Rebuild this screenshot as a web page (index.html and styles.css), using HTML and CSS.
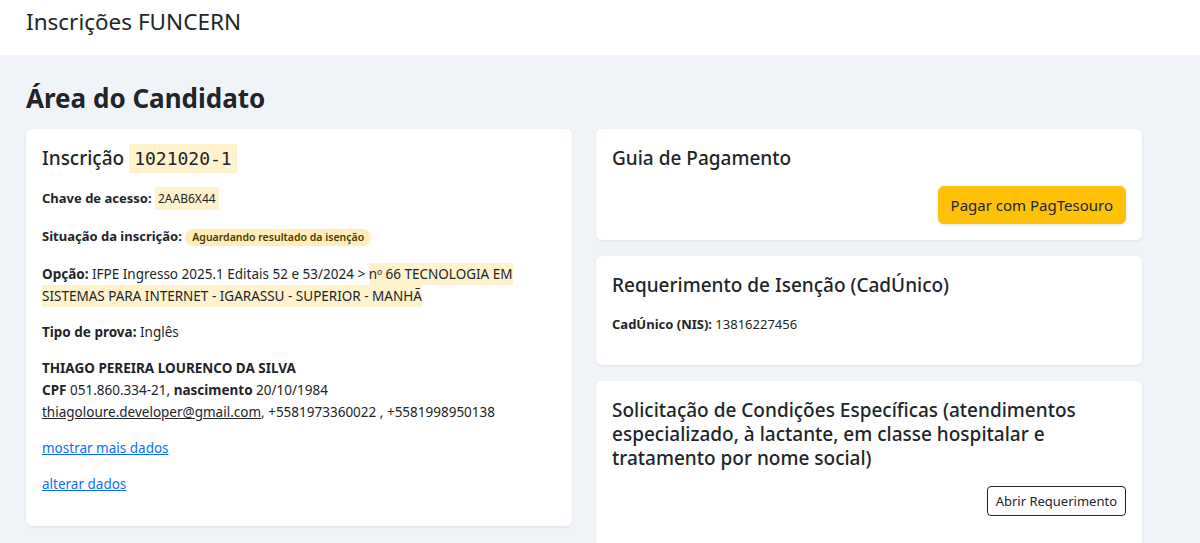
FILE: index.html
```html
<!DOCTYPE html>
<html lang="pt-BR">
<head>
<meta charset="utf-8">
<title>Inscrições FUNCERN</title>
<link rel="stylesheet" href="styles.css">
</head>
<body>
<header class="topbar">
  <span class="brand">Inscrições FUNCERN</span>
</header>
<main class="page">
  <h1 class="page-title">Área do Candidato</h1>
  <div class="columns">
    <section class="card card-main">
      <h2 class="card-title">Inscrição <mark class="code">1021020-1</mark></h2>
      <p class="small loose"><b>Chave de acesso:</b> <mark class="key">2AAB6X44</mark></p>
      <p class="small status"><b>Situação da inscrição:</b> <span class="badge">Aguardando resultado da isenção</span></p>
      <p><b>Opção:</b> IFPE Ingresso 2025.1 Editais 52 e 53/2024 &gt; <mark class="hl">nº 66 TECNOLOGIA EM SISTEMAS PARA INTERNET - IGARASSU - SUPERIOR - MANHÃ</mark></p>
      <p><b>Tipo de prova:</b> Inglês</p>
      <p><b>THIAGO PEREIRA LOURENCO DA SILVA</b><br>
        <b>CPF</b> 051.860.334-21, <b>nascimento</b> 20/10/1984<br>
        <a class="mail" href="#">thiagoloure.developer@gmail.com</a>, +5581973360022 , +5581998950138</p>
      <p class="gap"><a class="link" href="#">mostrar mais dados</a></p>
      <p><a class="link" href="#">alterar dados</a></p>
    </section>
    <div class="stack">
      <section class="card">
        <h2 class="card-title">Guia de Pagamento</h2>
        <div class="actions"><button class="btn btn-warning">Pagar com PagTesouro</button></div>
      </section>
      <section class="card">
        <h2 class="card-title">Requerimento de Isenção (CadÚnico)</h2>
        <p class="small"><b>CadÚnico (NIS):</b> 13816227456</p>
      </section>
      <section class="card card-open">
        <h2 class="card-title">Solicitação de Condições Específicas (atendimentos especializado, à lactante, em classe hospitalar e tratamento por nome social)</h2>
        <div class="actions"><button class="btn btn-outline">Abrir Requerimento</button></div>
      </section>
    </div>
  </div>
</main>
</body>
</html>
```
FILE: styles.css
```css
* { box-sizing: border-box; }
html, body { margin: 0; padding: 0; }
body {
  font-family: "Noto Sans", "Open Sans", sans-serif;
  color: #212529;
  background: #f0f3f8;
  font-size: 13.5px;
  overflow: hidden;
  height: 543px;
}
.topbar {
  background: #fff;
  height: 55px;
  padding: 7px 26px 0;
}
.brand { font-size: 22.5px; line-height: 30px; color: #212529; }
.page { padding: 25px 26px 0; }
.page-title {
  margin: 0 0 13px;
  font-size: 26px;
  line-height: 36px;
  font-weight: 700;
}
.columns {
  display: grid;
  grid-template-columns: 546px 546px;
  gap: 24px;
  align-items: start;
}
.stack { display: flex; flex-direction: column; gap: 16px; }
.card {
  background: #fff;
  border-radius: 6px;
  box-shadow: 0 1px 3px rgba(0,0,0,0.08);
  padding: 17px 16px 16px;
}
.card-main { padding-bottom: 17px; }
.card-open { min-height: 200px; }
.card-title {
  margin: 0 0 16px;
  font-size: 19px;
  line-height: 24px;
  font-weight: 500;
}
p { margin: 0 0 14px; line-height: 22px; }
p.small { font-size: 13px; }
p.loose { margin-bottom: 15px; }
p.status { margin-bottom: 16px; }
mark { color: inherit; background: #fff3cd; }
.code {
  font-family: "DejaVu Sans Mono", monospace;
  font-size: 18px;
  padding: 4px 5px;
}
.key { font-size: 12px; padding: 3px 3px; }
.hl { padding: 2px 0; }
.badge {
  display: inline-block;
  background: #ffeeba;
  color: #4a3a05;
  font-size: 10.5px;
  font-weight: 600;
  line-height: 17px;
  padding: 0 7px;
  border-radius: 8px;
}
.mail { color: #212529; }
.link { color: #0d6efd; }
.actions { display: flex; justify-content: flex-end; }
.btn {
  font-family: inherit;
  border-radius: 6px;
  cursor: pointer;
}
.btn-warning {
  background: #ffc107;
  border: 1px solid #ffc107;
  color: #212529;
  font-size: 15px;
  height: 38px;
  padding: 0 12px;
  box-shadow: 0 1px 3px rgba(0,0,0,0.12);
}
.btn-outline {
  background: #fff;
  border: 1px solid #212529;
  color: #212529;
  font-size: 13px;
  height: 30px;
  padding: 0 8px;
  border-radius: 4px;
}
```
